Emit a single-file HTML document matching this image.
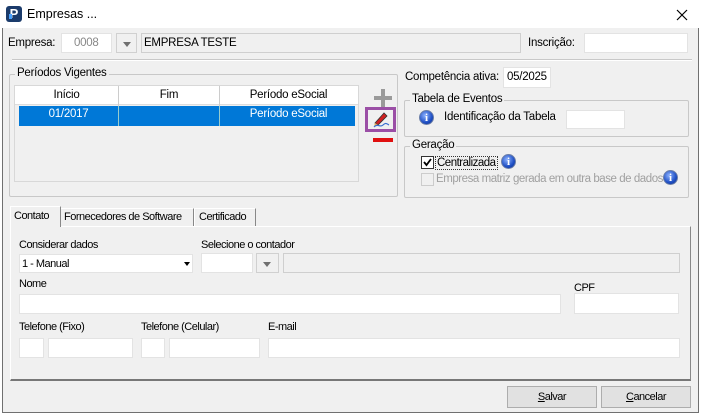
<!DOCTYPE html>
<html><head><meta charset="utf-8"><style>
*{box-sizing:border-box;margin:0;padding:0}
body{width:701px;height:414px;background:#fff;font-family:"Liberation Sans",sans-serif;font-size:11.5px;letter-spacing:-0.25px;color:#000;position:relative;overflow:hidden}
.a{position:absolute;white-space:nowrap}
.win{position:absolute;left:2px;top:0;width:697px;height:413px;border:1px solid #707070;border-top:none;background:#f0f0f0}
.tb{position:absolute;left:0;top:0;width:701px;height:28px;background:#fff}
.in{position:absolute;background:#fff;border:1px solid #e3e3e3}
.ro{position:absolute;background:#f0f0f0;border:1px solid #cfcfcf}
.grp{position:absolute;border:1px solid #c8c8c8;border-radius:2px}
.lg{position:absolute;background:#f0f0f0;padding:0 2px;top:-8px;left:5px}
.info{position:absolute;width:15px;height:15px;border-radius:50%;background:radial-gradient(circle at 40% 35%,#8fb4ff,#1f4fc4 60%,#0d2f86);color:#fff;font:bold 11px "Liberation Serif",serif;text-align:center;line-height:15px;border:1px solid #6c7fa8;letter-spacing:0}
.btn{position:absolute;background:#e1e1e1;border:1px solid #adadad;text-align:center;line-height:20px}
.dd{position:absolute;background:#f0f0f0;border:1px solid #d0d0d0}
.dd:after{content:"";position:absolute;left:6px;top:8px;border:4px solid transparent;border-top:5px solid #707070}
.lo{font-size:11px;letter-spacing:-0.5px}
</style></head><body>
<div class="win"></div>
<div class="tb"></div>
<div class="a" style="left:6px;top:6px;width:16px;height:16px;background:#1b3b6b;border-radius:3px;color:#fff;font:bold 13px 'Liberation Sans';text-align:center;line-height:16px;letter-spacing:0">P</div>
<div class="a" style="left:9px;top:14px;width:3px;height:5px;background:#4aa3ff"></div>
<div class="a" style="left:27px;top:7px;font-size:12.5px;letter-spacing:0">Empresas ...</div>
<svg class="a" style="left:676px;top:9px" width="12" height="12"><path d="M1 1L11 11M11 1L1 11" stroke="#000" stroke-width="1.2"/></svg>

<div class="a" style="left:8px;top:37px">Empresa:</div>
<div class="in" style="left:61px;top:33px;width:51px;height:20px;color:#888;padding:3px 0 0 12px">0008</div>
<div class="dd" style="left:116px;top:33px;width:21px;height:20px"></div>
<div class="ro" style="left:141px;top:33px;width:380px;height:20px;padding:3px 2px">EMPRESA TESTE</div>
<div class="a" style="left:528px;top:37px">Inscrição:</div>
<div class="in" style="left:584px;top:33px;width:104px;height:20px"></div>
<div class="a" style="left:12px;top:59px;width:680px;height:2px;border-top:1px solid #c8c8c8;border-bottom:1px solid #fff"></div>

<div class="grp" style="left:9px;top:74px;width:389px;height:123px"><span class="lg">Períodos Vigentes</span></div>
<div class="a" style="left:14px;top:85px;width:345px;height:97px;background:#f0f0f0;border:1px solid #d8d8d8"></div>
<div class="a" style="left:15px;top:86px;width:343px;height:19px;background:#fff;border-bottom:1px solid #ddd"></div>
<div class="a" style="left:118px;top:86px;height:40px;border-left:1px solid #ccc"></div>
<div class="a" style="left:219px;top:86px;height:40px;border-left:1px solid #ccc"></div>
<div class="a" style="left:15px;top:89px;width:103px;text-align:center">Início</div>
<div class="a" style="left:119px;top:89px;width:100px;text-align:center">Fim</div>
<div class="a" style="left:220px;top:89px;width:137px;text-align:center">Período eSocial</div>
<div class="a" style="left:19px;top:106px;width:336px;height:20px;background:#0078d7;color:#fff"></div>
<div class="a" style="left:118px;top:106px;height:20px;border-left:1px solid #9cc"></div>
<div class="a" style="left:219px;top:106px;height:20px;border-left:1px solid #9cc"></div>
<div class="a" style="left:19px;top:108px;width:99px;text-align:center;color:#fff">01/2017</div>
<div class="a" style="left:220px;top:108px;width:137px;text-align:center;color:#fff">Período eSocial</div>

<div class="a" style="left:374px;top:96px;width:18px;height:4px;background:#9a9a9a"></div>
<div class="a" style="left:381px;top:89px;width:4px;height:18px;background:#9a9a9a"></div>
<div class="a" style="left:365px;top:107px;width:31px;height:25px;border:3px solid #9b4fa6"></div>
<svg class="a" style="left:371px;top:110px" width="20" height="19"><path d="M4 13L13 3L16 6L7 15Z" fill="#d02020" stroke="#333" stroke-width="0.8"/><path d="M4 13L3 16L7 15Z" fill="#e8b060"/><path d="M3 17C7 13 9 18 12 15S16 14 18 15" stroke="#3a6fd0" stroke-width="1.2" fill="none"/></svg>
<div class="a" style="left:373px;top:138px;width:20px;height:4px;background:#e01010"></div>

<div class="a" style="left:405px;top:71px">Competência ativa:</div>
<div class="in" style="left:503px;top:67px;width:48px;height:21px;padding:3px 3px">05/2025</div>
<div class="grp" style="left:404px;top:100px;width:285px;height:37px"><span class="lg">Tabela de Eventos</span></div>
<div class="info" style="left:419px;top:110px">i</div>
<div class="a" style="left:444px;top:111px">Identificação da Tabela</div>
<div class="in" style="left:566px;top:110px;width:59px;height:19px"></div>
<div class="grp" style="left:404px;top:146px;width:285px;height:52px"><span class="lg">Geração</span></div>
<div class="a" style="left:421px;top:156px;width:13px;height:13px;background:#fff;border:1px solid #333"></div>
<svg class="a" style="left:422px;top:157px" width="11" height="11"><path d="M2 5L4.5 8L9 2" stroke="#000" stroke-width="1.8" fill="none"/></svg>
<div class="a" style="left:435px;top:156px;border:1px dotted #333;padding:0 1px;letter-spacing:-0.5px">Centralizada</div>
<div class="info" style="left:501px;top:154px">i</div>
<div class="a" style="left:421px;top:173px;width:13px;height:13px;border:1px solid #ccc"></div>
<div class="a" style="left:436px;top:173px;color:#a0a0a0;letter-spacing:-0.45px">Empresa matriz gerada em outra base de dados</div>
<div class="info" style="left:663px;top:170px">i</div>

<div class="a" style="left:10px;top:226px;width:681px;height:155px;border:1px solid #fff;border-right:1px solid #888;border-bottom:2px solid #777"></div>
<div class="a" style="left:10px;top:206px;width:51px;height:21px;background:#f0f0f0;border:1px solid #fff;border-bottom:none;border-right:1px solid #888"></div>
<div class="a" style="left:61px;top:208px;width:133px;height:18px;border-top:1px solid #fff;border-right:1px solid #888"></div>
<div class="a" style="left:194px;top:208px;width:62px;height:18px;border-top:1px solid #fff;border-left:1px solid #fff;border-right:1px solid #888"></div>
<div class="a lo" style="left:14px;top:210px">Contato</div>
<div class="a lo" style="left:64px;top:211px">Fornecedores de Software</div>
<div class="a lo" style="left:199px;top:211px">Certificado</div>

<div class="a lo" style="left:19px;top:239px">Considerar dados</div>
<div class="in lo" style="left:19px;top:254px;width:174px;height:19px;padding:3px 2px">1 - Manual</div>
<div class="a" style="left:184px;top:262px;border:3px solid transparent;border-top:4px solid #000"></div>
<div class="a lo" style="left:201px;top:239px">Selecione o contador</div>
<div class="in" style="left:201px;top:253px;width:52px;height:20px"></div>
<div class="dd" style="left:256px;top:253px;width:23px;height:20px"></div>
<div class="ro" style="left:283px;top:253px;width:397px;height:20px"></div>
<div class="a lo" style="left:19px;top:278px">Nome</div>
<div class="in" style="left:19px;top:294px;width:542px;height:20px"></div>
<div class="a lo" style="left:574px;top:282px">CPF</div>
<div class="in" style="left:574px;top:293px;width:105px;height:21px"></div>
<div class="a lo" style="left:19px;top:321px">Telefone (Fixo)</div>
<div class="in" style="left:19px;top:338px;width:25px;height:20px"></div>
<div class="in" style="left:48px;top:338px;width:85px;height:20px"></div>
<div class="a lo" style="left:141px;top:321px">Telefone (Celular)</div>
<div class="in" style="left:141px;top:338px;width:24px;height:20px"></div>
<div class="in" style="left:169px;top:338px;width:91px;height:20px"></div>
<div class="a lo" style="left:268px;top:321px">E-mail</div>
<div class="in" style="left:268px;top:338px;width:412px;height:20px"></div>

<div class="btn lo" style="left:507px;top:386px;width:90px;height:22px"><u>S</u>alvar</div>
<div class="btn lo" style="left:601px;top:386px;width:90px;height:22px"><u>C</u>ancelar</div>
</body></html>
